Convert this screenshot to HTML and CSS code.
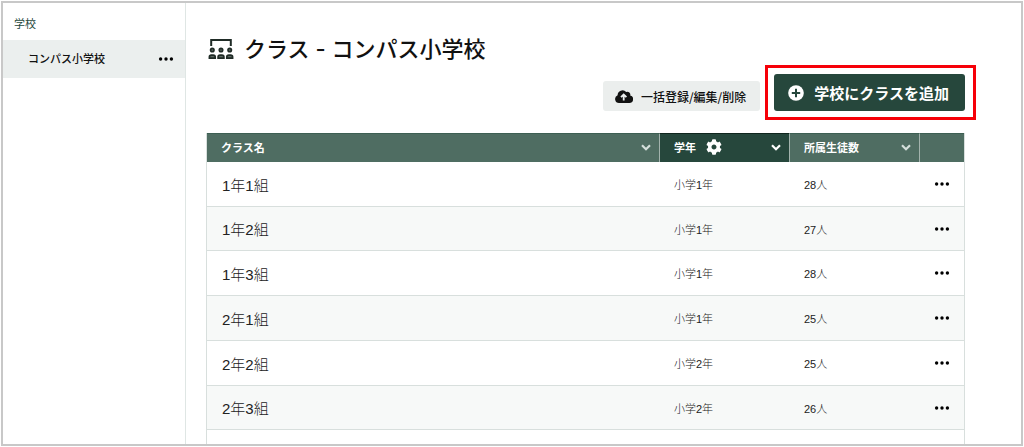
FILE: index.html
```html
<!DOCTYPE html>
<html lang="ja">
<head>
  <meta charset="UTF-8">
  <meta name="viewport" content="width=device-width, initial-scale=1.0">
  <title>クラス - コンパス小学校</title>
  <link rel="stylesheet" href="styles.css">
</head>
<body>
  <svg class="symbols" aria-hidden="true">
    <symbol id="dots" viewBox="0 0 16 4">
      <circle cx="2.6" cy="2" r="1.7"/><circle cx="8" cy="2" r="1.7"/><circle cx="13.4" cy="2" r="1.7"/>
    </symbol>
    <symbol id="chevron" viewBox="0 0 10 7">
      <path d="M1 1.2l4 4 4-4" fill="none" stroke="currentColor" stroke-width="2.2"/>
    </symbol>
  </svg>

  <div class="app">
    <aside class="sidebar">
      <h2 class="sidebar-title">学校</h2>
      <div class="school">
        <a class="school-link" href="#">コンパス小学校</a>
        <button class="menu-btn" aria-label="メニュー"><svg class="dots"><use href="#dots"/></svg></button>
      </div>
    </aside>

    <main class="main">
      <h1 class="page-title">
        <svg class="title-icon" viewBox="0 0 26 22" aria-hidden="true">
          <path d="M3.2 8V2h19.6v6" fill="none" stroke="currentColor" stroke-width="2"/>
          <g fill="#5d6963" stroke="currentColor" stroke-width="1.7">
            <circle cx="4.3" cy="12" r="1.7"/>
            <circle cx="13" cy="12" r="1.7"/>
            <circle cx="21.7" cy="12" r="1.7"/>
            <path d="M1.4 20.2v-1.1q0-2 2-2h1.8q2 0 2 2v1.1z"/>
            <path d="M10.1 20.2v-1.1q0-2 2-2h1.8q2 0 2 2v1.1z"/>
            <path d="M18.8 20.2v-1.1q0-2 2-2h1.8q2 0 2 2v1.1z"/>
          </g>
        </svg>
        クラス - コンパス小学校
      </h1>

      <div class="actions">
        <button class="btn bulk-btn">
          <svg class="cloud-icon" viewBox="0 0 18 13" aria-hidden="true">
            <path d="M4 13a4 4 0 0 1-1.4-7.7A4.9 4.9 0 0 1 11.2 2a2.900 2.900 0 0 1 4 3.500A3.800 3.800 0 0 1 14.300 13z" fill="currentColor"/>
            <path d="M8.700 10.500V5M6 7.200l2.700-2.700 2.700 2.700" fill="none" stroke="#ebeeed" stroke-width="1.8"/>
          </svg>
          一括登録/編集/削除
        </button>
        <div class="highlight">
          <button class="btn add-btn">
            <svg class="plus-icon" viewBox="0 0 16 16" aria-hidden="true">
              <circle cx="8" cy="8" r="7.8" fill="currentColor"/>
              <path d="M8 3.800v8.400M3.800 8h8.400" stroke="#26473c" stroke-width="2"/>
            </svg>
            学校にクラスを追加
          </button>
        </div>
      </div>

      <table class="class-table">
        <colgroup>
          <col>
          <col class="col-grade">
          <col class="col-count">
          <col class="col-menu">
        </colgroup>
        <thead>
          <tr>
            <th><div class="head">クラス名<button class="sort-btn" aria-label="クラス名で並べ替え"><svg class="chevron"><use href="#chevron"/></svg></button></div></th>
            <th class="sorted">
              <div class="head">
                学年
                <button class="gear-btn" aria-label="学年の設定">
                  <svg class="gear" viewBox="0 0 512 512"><path fill="currentColor" d="M487.400 315.700l-42.600-24.600c4.300-23.200 4.300-47 0-70.200l42.600-24.600c4.900-2.800 7.100-8.600 5.500-14-11.100-35.600-30-67.800-54.700-94.600-3.800-4.100-10-5.100-14.800-2.300L380.800 110c-17.900-15.400-38.500-27.300-60.800-35.100V25.800c0-5.600-3.900-10.500-9.400-11.700-36.700-8.200-74.300-7.800-109.200 0-5.500 1.200-9.400 6.100-9.400 11.700V75c-22.200 7.900-42.800 19.800-60.800 35.100L88.700 85.500c-4.900-2.800-11-1.900-14.800 2.300-24.700 26.700-43.600 58.900-54.700 94.600-1.700 5.400.6 11.200 5.500 14L67.300 221c-4.300 23.200-4.300 47 0 70.200l-42.600 24.600c-4.900 2.800-7.100 8.600-5.500 14 11.100 35.600 30 67.800 54.700 94.600 3.800 4.100 10 5.100 14.800 2.300l42.600-24.600c17.900 15.400 38.500 27.300 60.800 35.100v49.200c0 5.600 3.900 10.500 9.400 11.700 36.700 8.200 74.300 7.800 109.200 0 5.500-1.200 9.400-6.100 9.400-11.700v-49.200c22.200-7.900 42.800-19.800 60.800-35.100l42.600 24.600c4.900 2.800 11 1.900 14.800-2.300 24.700-26.700 43.600-58.900 54.700-94.600 1.500-5.500-.7-11.300-5.600-14.100zM256 336c-44.100 0-80-35.900-80-80s35.900-80 80-80 80 35.900 80 80-35.900 80-80 80z"/></svg>
                </button>
                <button class="sort-btn" aria-label="学年で並べ替え"><svg class="chevron"><use href="#chevron"/></svg></button>
              </div>
            </th>
            <th><div class="head">所属生徒数<button class="sort-btn" aria-label="所属生徒数で並べ替え"><svg class="chevron"><use href="#chevron"/></svg></button></div></th>
            <th></th>
          </tr>
        </thead>
        <tbody id="classRows">
          <!-- rows are added by script.js -->
        </tbody>
      </table>
    </main>
  </div>

  <script src="script.js"></script>
</body>
</html>
```

FILE: styles.css
```css
* {
  box-sizing: border-box;
}
body {
  margin: 0;
  padding: 1px;
  height: 100vh;
  background: #fff;
  color: #111;
  font-family: "Liberation Sans", "Noto Sans CJK JP", sans-serif;
  font-size: 11px;
}
button {
  border: none;
  padding: 0;
  background: none;
  color: inherit;
  font: inherit;
  cursor: pointer;
}
svg {
  display: block;
  flex: none;
}
.symbols {
  position: absolute;
  width: 0;
  height: 0;
}
.app {
  display: flex;
  height: calc(100vh - 2px);
  border: 2px solid #c8c8c8;
  overflow: hidden;
}

/* sidebar */
.sidebar {
  flex: 0 0 183px;
  border-right: 1px solid #dfe6e4;
}
.sidebar-title {
  margin: 0;
  padding: 13px 11px 8px;
  color: #26473c;
  font-size: 11px;
  font-weight: 400;
  line-height: 16px;
}
.school {
  display: flex;
  align-items: center;
  justify-content: space-between;
  height: 38px;
  padding: 0 11px 0 25px;
  background: #ebefee;
}
.school-link {
  padding-bottom: 2px;
  color: #111;
  font-weight: 500;
  text-decoration: none;
}
.dots {
  width: 16px;
  height: 4px;
}

/* main */
.main {
  flex: 1;
  padding: 32px 56px 0 20px;
}
.page-title {
  display: flex;
  align-items: center;
  gap: 10px;
  margin: 0;
  padding-left: 2px;
  font-family: Inter, "Noto Sans CJK JP", sans-serif;
  font-size: 22px;
  font-weight: 500;
  line-height: 28px;
}
.title-icon {
  width: 26px;
  height: 22px;
  color: #1f2b26;
}
.actions {
  display: flex;
  justify-content: flex-end;
  align-items: flex-end;
  gap: 14px;
  margin: 11px 0 22px;
}
.btn {
  display: flex;
  align-items: center;
  border-radius: 3px;
  white-space: nowrap;
}
.bulk-btn {
  gap: 8px;
  height: 30px;
  padding: 0 14px 0 12px;
  background: #ebeeed;
  font-family: "Noto Sans CJK JP", sans-serif;
  font-size: 12px;
  font-weight: 500;
}
.cloud-icon {
  width: 18px;
  height: 13px;
}
.highlight {
  position: relative;
}
.highlight::after {
  content: "";
  position: absolute;
  inset: -9px -11px -9px -9px;
  border: 3px solid #f60008;
  pointer-events: none;
}
.add-btn {
  gap: 10px;
  height: 37px;
  padding: 0 16px 0 14px;
  background: #26473c;
  color: #fff;
  font-size: 15px;
  font-weight: 700;
}
.plus-icon {
  width: 16px;
  height: 16px;
}

/* table */
.class-table {
  width: 100%;
  table-layout: fixed;
  border-collapse: separate;
  border-spacing: 0;
  border: 1px solid #d8dfdd;
  border-top: none;
}
.col-grade,
.col-count {
  width: 130px;
}
.col-menu {
  width: 45px;
}
th {
  height: 29px;
  padding: 0 8px 2px 14px;
  background: #4f6d62;
  border-top: 1px solid #3d5f53;
  color: #fff;
  font-weight: 700;
  text-align: left;
}
th + th {
  border-left: 1px solid #a3b3ad;
}
th.sorted {
  background: #26473c;
  border-top-color: #10261e;
}
.head {
  display: flex;
  align-items: center;
  gap: 10px;
}
.sort-btn {
  margin-left: auto;
  color: #d5dfdb;
}
.sorted .sort-btn {
  color: #fff;
}
.chevron {
  width: 10px;
  height: 7px;
}
.gear {
  width: 16px;
  height: 16px;
}
td {
  height: 45px;
  padding: 0 15px;
  border-bottom: 1px solid #d8dfdd;
  color: #222;
  font-weight: 300;
}
tbody tr:nth-child(even) {
  background: #f7f9f8;
}
tbody tr:nth-child(4n + 2) td {
  height: 44px;
}
.class-name {
  font-size: 15px;
}
td .menu-btn {
  display: block;
  color: #111;
}
```

FILE: script.js
```javascript
const classes = [
  { name: "1年1組", grade: "小学1年", count: 28 },
  { name: "1年2組", grade: "小学1年", count: 27 },
  { name: "1年3組", grade: "小学1年", count: 28 },
  { name: "2年1組", grade: "小学1年", count: 25 },
  { name: "2年2組", grade: "小学2年", count: 25 },
  { name: "2年3組", grade: "小学2年", count: 26 },
  { name: "", grade: "", count: null }
];

const tableBody = document.getElementById("classRows");

classes.forEach((item) => {
  const row = document.createElement("tr");

  row.innerHTML = item.name === "" ? `<td colspan="4"></td>` : `
    <td class="class-name">${item.name}</td>
    <td>${item.grade}</td>
    <td>${item.count}人</td>
    <td><button class="menu-btn" aria-label="メニュー"><svg class="dots"><use href="#dots"/></svg></button></td>
  `;

  tableBody.appendChild(row);
});
```
